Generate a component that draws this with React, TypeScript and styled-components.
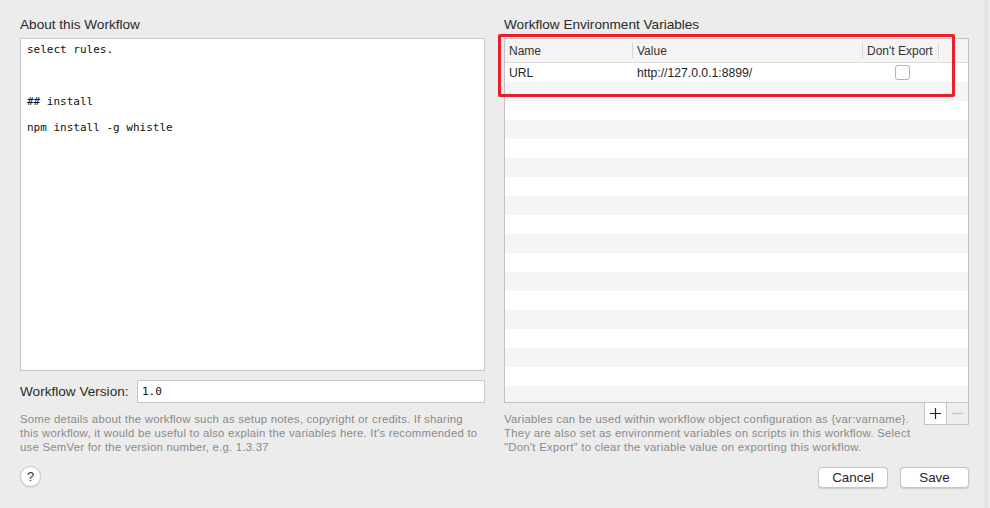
import React from "react"
import styled, { createGlobalStyle } from "styled-components"

const GlobalStyle = createGlobalStyle`
  html, body {
    margin: 0;
    padding: 0;
    background: #ececec;
  }
  body {
    font-family: "Liberation Sans", Arial, sans-serif;
    color: #262626;
  }
`

const Window = styled.div`
  width: 990px;
  height: 508px;
  box-sizing: border-box;
  padding: 17px 21px 0 20px;
  display: grid;
  grid-template-columns: 465px 465px;
  column-gap: 19px;
  background: #ececec;
  border-left: 2px solid #e4e4e4;
  border-right: 4px solid #e4e4e4;
  margin-left: -2px;
`

const Column = styled.div`
  display: flex;
  flex-direction: column;
`

const SectionTitle = styled.div`
  font-size: 13.6px;
  line-height: 16px;
  height: 16px;
  margin-bottom: 5px;
  color: #2a2a2a;
`

const NotesBox = styled.div`
  height: 333px;
  box-sizing: border-box;
  background: #fff;
  border: 1px solid #c8c8c8;
  padding: 4px 6px;
  font-family: "DejaVu Sans Mono", "Liberation Mono", monospace;
  font-size: 11px;
  line-height: 13px;
  color: #111;
  white-space: pre;
`

const VersionRow = styled.div`
  display: flex;
  align-items: center;
  margin-top: 9px;
  gap: 6px;
`

const FieldLabel = styled.label`
  font-size: 13.6px;
  color: #2a2a2a;
  width: 111px;
`

const VersionInput = styled.div`
  flex: 1;
  height: 23px;
  box-sizing: border-box;
  background: #fff;
  border: 1px solid #c8c8c8;
  padding: 0 4px;
  display: flex;
  align-items: center;
  font-family: "DejaVu Sans Mono", "Liberation Mono", monospace;
  font-size: 11px;
  color: #111;
`

const HelpText = styled.p<{ $spacing?: number }>`
  margin: 0;
  padding-top: 9px;
  font-size: 11.4px;
  line-height: 14px;
  letter-spacing: ${(p) => p.$spacing ?? 0}px;
  color: #8a8a8a;
  white-space: nowrap;
`

const HelpButton = styled.button`
  margin-top: 12px;
  width: 21px;
  height: 21px;
  border-radius: 50%;
  border: 1px solid #c9c9c9;
  background: #fff;
  box-shadow: 0 0.5px 1px rgba(0, 0, 0, 0.15);
  padding: 0;
  font-family: "Liberation Sans", Arial, sans-serif;
  font-size: 13px;
  color: #333;
  display: flex;
  align-items: center;
  justify-content: center;
`

const TableWrap = styled.div`
  position: relative;
`

const Table = styled.div`
  height: 365px;
  box-sizing: border-box;
  border: 1px solid #c2c2c2;
  background: #fff;
  overflow: hidden;
`

const HeaderRow = styled.div`
  display: grid;
  grid-template-columns: 128px 230px 76px 1fr;
  height: 24px;
  box-sizing: border-box;
  border-bottom: 1px solid #dcdcdc;
  background: #f4f4f4;
  font-size: 12px;
  color: #333;
`

const HeaderCell = styled.div<{ $sep?: boolean }>`
  display: flex;
  align-items: center;
  padding-left: 4px;
  position: relative;
  &::after {
    content: "";
    display: ${(p) => (p.$sep ? "block" : "none")};
    position: absolute;
    right: 0;
    top: 4px;
    bottom: 4px;
    width: 1px;
    background: #d6d6d6;
  }
`

const DataRow = styled.div<{ $alt: boolean }>`
  display: grid;
  grid-template-columns: 128px 230px 76px 1fr;
  height: 19px;
  background: ${(p) => (p.$alt ? "#f4f5f5" : "#fff")};
  font-size: 12.2px;
  color: #1f1f1f;
`

const DataCell = styled.div<{ $center?: boolean }>`
  display: flex;
  align-items: center;
  padding-left: ${(p) => (p.$center ? 0 : 4)}px;
  justify-content: ${(p) => (p.$center ? "center" : "flex-start")};
`

const Checkbox = styled.span`
  width: 13px;
  height: 13px;
  border: 1px solid #b3b3b3;
  border-radius: 3px;
  background: #fff;
  margin-left: 2px;
`

const Highlight = styled.div`
  position: absolute;
  left: -6px;
  top: -4px;
  width: 457px;
  height: 63px;
  box-sizing: border-box;
  border: 3px solid #e9202b;
  border-radius: 2px;
  pointer-events: none;
`

const BelowTable = styled.div`
  display: flex;
  justify-content: space-between;
  align-items: flex-start;
`

const PlusMinus = styled.div`
  display: flex;
  border: 1px solid #c4c4c4;
  border-top: none;
  height: 22px;
  box-sizing: border-box;
  background: #f6f6f6;
`

const PMButton = styled.div<{ $disabled?: boolean }>`
  width: 21px;
  display: flex;
  align-items: center;
  justify-content: center;
  & + & {
    border-left: 1px solid #c4c4c4;
  }
  background: ${(p) => (p.$disabled ? "#efefef" : "#fff")};
`

const Footer = styled.div`
  display: flex;
  justify-content: flex-end;
  gap: 12px;
  margin-top: 13px;
`

const PushButton = styled.button<{ $w: number }>`
  width: ${(p) => p.$w}px;
  height: 21px;
  box-sizing: border-box;
  border: 1px solid #c6c6c6;
  border-radius: 4px;
  background: #fff;
  box-shadow: 0 0.5px 1px rgba(0, 0, 0, 0.15);
  font-family: "Liberation Sans", Arial, sans-serif;
  font-size: 13.4px;
  color: #262626;
  padding: 0;
`

const notes = "select rules.\n\n\n\n## install\n\nnpm install -g whistle"

const rows = Array.from({ length: 19 }, (_, i) => i)

const App = () => {
  return (
    <>
      <GlobalStyle />
      <Window>
        <Column>
          <SectionTitle>About this Workflow</SectionTitle>
          <NotesBox>{notes}</NotesBox>
          <VersionRow>
            <FieldLabel>Workflow Version:</FieldLabel>
            <VersionInput>1.0</VersionInput>
          </VersionRow>
          <HelpText $spacing={0.22}>
            Some details about the workflow such as setup notes, copyright or
            credits. If sharing
            <br />
            this workflow, it would be useful to also explain the variables
            here. It's recommended to
            <br />
            use SemVer for the version number, e.g. 1.3.37
          </HelpText>
          <HelpButton>?</HelpButton>
        </Column>

        <Column>
          <SectionTitle>Workflow Environment Variables</SectionTitle>
          <TableWrap>
            <Table>
              <HeaderRow>
                <HeaderCell $sep>Name</HeaderCell>
                <HeaderCell $sep>Value</HeaderCell>
                <HeaderCell $sep>Don't Export</HeaderCell>
                <HeaderCell />
              </HeaderRow>
              {rows.map((i) =>
                i === 0 ? (
                  <DataRow key={i} $alt={false}>
                    <DataCell>URL</DataCell>
                    <DataCell>http://127.0.0.1:8899/</DataCell>
                    <DataCell $center>
                      <Checkbox />
                    </DataCell>
                    <DataCell />
                  </DataRow>
                ) : (
                  <DataRow key={i} $alt={i % 2 === 1} />
                )
              )}
            </Table>
            <Highlight />
          </TableWrap>
          <BelowTable>
            <HelpText $spacing={0.25}>
              Variables can be used within workflow object configuration as
              {" {var:varname}"}.
              <br />
              They are also set as environment variables on scripts in this
              workflow. Select
              <br />
              "Don't Export" to clear the variable value on exporting this
              workflow.
            </HelpText>
            <PlusMinus>
              <PMButton>
                <svg width="13" height="13" viewBox="0 0 13 13">
                  <path d="M6.5 1v11M1 6.5h11" stroke="#222" strokeWidth="1.2" />
                </svg>
              </PMButton>
              <PMButton $disabled>
                <svg width="13" height="13" viewBox="0 0 13 13">
                  <path d="M1 6.5h11" stroke="#c4c4c4" strokeWidth="1.2" />
                </svg>
              </PMButton>
            </PlusMinus>
          </BelowTable>
          <Footer>
            <PushButton $w={70}>Cancel</PushButton>
            <PushButton $w={69}>Save</PushButton>
          </Footer>
        </Column>
      </Window>
    </>
  )
}

export default App
